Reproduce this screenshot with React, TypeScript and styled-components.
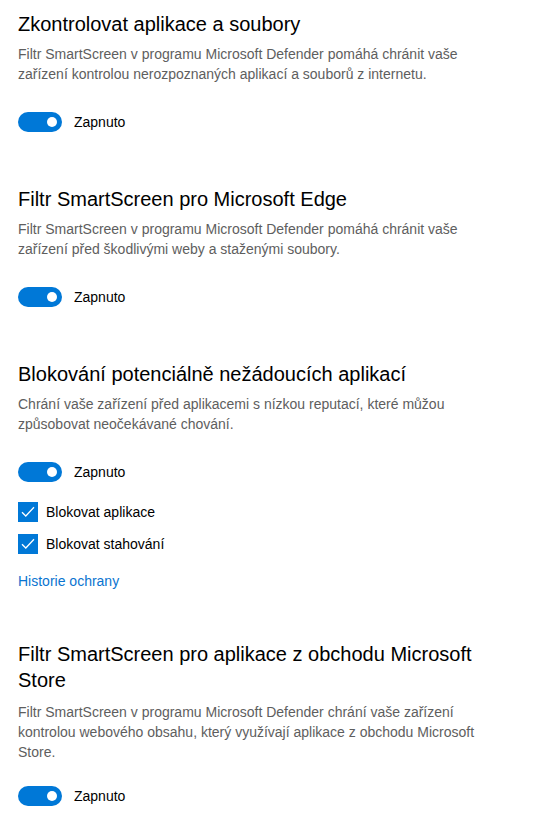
import React from "react";
import styled, { createGlobalStyle } from "styled-components";

const Global = createGlobalStyle`
  html, body { margin: 0; padding: 0; background: #ffffff; }
  body { font-family: "Segoe UI", "Liberation Sans", Arial, sans-serif; }
`;

const Page = styled.div`
  display: flex;
  flex-direction: column;
  padding: 11px 18px 0 18px;
  width: 546px;
  box-sizing: border-box;
`;

const Section = styled.section<{ $gap?: number }>`
  display: flex;
  flex-direction: column;
  margin-bottom: ${(p) => p.$gap ?? 54}px;
`;

const Title = styled.h2<{ $space?: number }>`
  margin: 0 0 ${(p) => p.$space ?? 7}px 0;
  font-size: 20px;
  line-height: 26px;
  font-weight: 400;
  color: #000000;
  max-width: 470px;
`;

const Desc = styled.p<{ $space?: number }>`
  margin: 0 0 ${(p) => p.$space ?? 28}px 0;
  font-size: 14px;
  line-height: 20px;
  color: #5e5e5e;
  max-width: 490px;
`;

const ToggleRow = styled.label`
  display: flex;
  align-items: center;
  gap: 12px;
  height: 20px;
  font-size: 14px;
  color: #000;
`;

const Track = styled.span`
  position: relative;
  width: 44px;
  height: 20px;
  border-radius: 10px;
  background: #0078d7;
  flex-shrink: 0;
`;

const Knob = styled.span`
  position: absolute;
  right: 5px;
  top: 5px;
  width: 10px;
  height: 10px;
  border-radius: 50%;
  background: #ffffff;
`;

const CheckList = styled.div`
  display: flex;
  flex-direction: column;
  gap: 12px;
  margin-top: 20px;
`;

const CheckRow = styled.label`
  display: flex;
  align-items: center;
  gap: 8px;
  height: 20px;
  font-size: 14px;
  color: #000;
`;

const Box = styled.span`
  width: 20px;
  height: 20px;
  background: #0078d7;
  display: flex;
  align-items: center;
  justify-content: center;
  flex-shrink: 0;
`;

const Link = styled.a`
  margin-top: 17px;
  font-size: 14px;
  line-height: 20px;
  color: #0a74d0;
  text-decoration: none;
  align-self: flex-start;
`;

const Toggle = () => (
  <ToggleRow>
    <Track>
      <Knob />
    </Track>
    Zapnuto
  </ToggleRow>
);

const Check = ({ label }: { label: string }) => (
  <CheckRow>
    <Box>
      <svg width="14" height="12" viewBox="0 0 14 12">
        <path d="M1 6.2 L4.8 10 L13 1.2" fill="none" stroke="#fff" strokeWidth="1.3" />
      </svg>
    </Box>
    {label}
  </CheckRow>
);

export default function App() {
  return (
    <>
      <Global />
      <Page>
        <Section>
          <Title>Zkontrolovat aplikace a soubory</Title>
          <Desc>
            Filtr SmartScreen v programu Microsoft Defender pomáhá chránit vaše zařízení kontrolou
            nerozpoznaných aplikací a souborů z internetu.
          </Desc>
          <Toggle />
        </Section>
        <Section>
          <Title>Filtr SmartScreen pro Microsoft Edge</Title>
          <Desc>
            Filtr SmartScreen v programu Microsoft Defender pomáhá chránit vaše zařízení před
            škodlivými weby a staženými soubory.
          </Desc>
          <Toggle />
        </Section>
        <Section $gap={50}>
          <Title>Blokování potenciálně nežádoucích aplikací</Title>
          <Desc>
            Chrání vaše zařízení před aplikacemi s nízkou reputací, které můžou způsobovat
            neočekávané chování.
          </Desc>
          <Toggle />
          <CheckList>
            <Check label="Blokovat aplikace" />
            <Check label="Blokovat stahování" />
          </CheckList>
          <Link href="#">Historie ochrany</Link>
        </Section>
        <Section>
          <Title $space={9}>Filtr SmartScreen pro aplikace z obchodu Microsoft Store</Title>
          <Desc $space={24}>
            Filtr SmartScreen v programu Microsoft Defender chrání vaše zařízení kontrolou webového
            obsahu, který využívají aplikace z obchodu Microsoft Store.
          </Desc>
          <Toggle />
        </Section>
      </Page>
    </>
  );
}
